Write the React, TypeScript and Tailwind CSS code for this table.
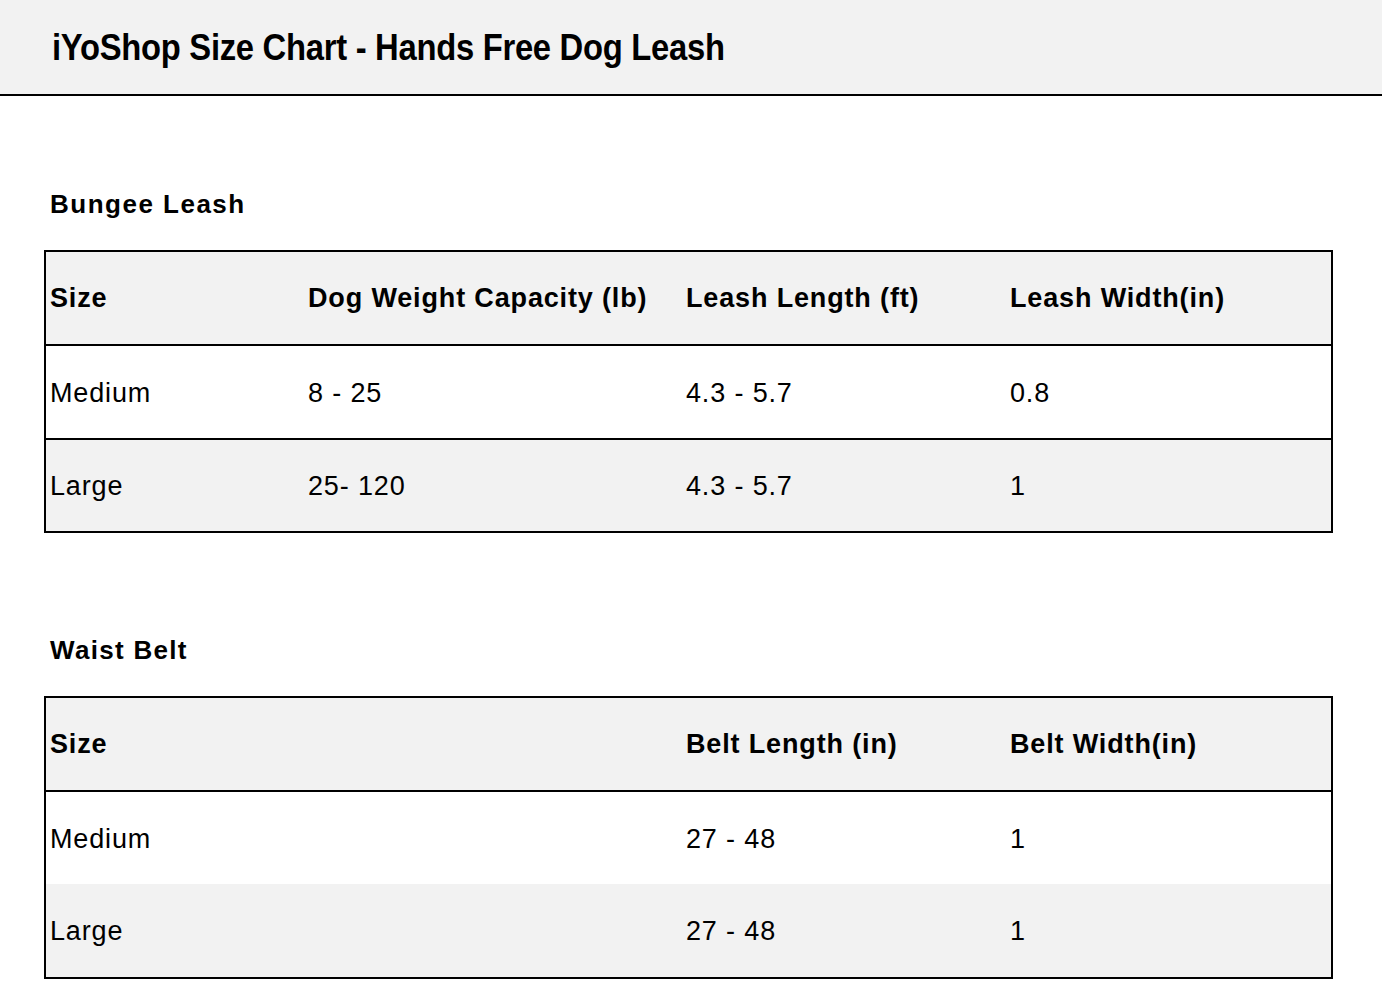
import React from "react";

const font = { fontFamily: '"Liberation Sans", Arial, Helvetica, sans-serif' };

type Row = { cells: string[]; bg: string; border: boolean; h: string };

function Table({ head, rows }: { head: string[]; rows: Row[] }) {
  const cols = "grid grid-cols-[258px_378px_324px_1fr]";
  return (
    <div className="mx-[44px] mr-[49px] border-2 border-black">
      <div className={`${cols} h-[94px] items-center bg-[#f2f2f2] border-b-2 border-black`}>
        {head.map((h, i) => (
          <div key={i} className="pl-[4px] text-[27px] font-bold tracking-[0.85px] text-black">
            {h}
          </div>
        ))}
      </div>
      {rows.map((r, ri) => (
        <div
          key={ri}
          className={`${cols} items-center ${r.bg} ${r.h} ${r.border ? "border-b-2 border-black" : ""}`}
        >
          {r.cells.map((c, i) => (
            <div key={i} className="pl-[4px] pt-[2px] text-[27px] tracking-[0.85px] text-black">
              {c}
            </div>
          ))}
        </div>
      ))}
    </div>
  );
}

export default function App() {
  return (
    <div className="w-[1382px] h-[982px] bg-white overflow-hidden" style={font}>
      <div className="h-[96px] bg-[#f2f2f2] border-b-2 border-black flex items-center pl-[52px]">
        <h1 className="text-[36px] font-bold text-black leading-none tracking-[-0.3px] scale-x-[0.91] origin-left whitespace-nowrap pt-[2px]">
          iYoShop Size Chart - Hands Free Dog Leash
        </h1>
      </div>

      <h2 className="mt-[93px] pl-[50px] h-[30px] leading-[30px] text-[26px] font-bold tracking-[1.5px] text-black">
        Bungee Leash
      </h2>
      <div className="mt-[31px]">
        <Table
          head={["Size", "Dog Weight Capacity (lb)", "Leash Length (ft)", "Leash Width(in)"]}
          rows={[
            { cells: ["Medium", "8 - 25", "4.3 - 5.7", "0.8"], bg: "bg-white", border: true, h: "h-[94px]" },
            { cells: ["Large", "25- 120", "4.3 - 5.7", "1"], bg: "bg-[#f2f2f2]", border: false, h: "h-[91px]" },
          ]}
        />
      </div>

      <h2 className="mt-[102px] pl-[50px] h-[30px] leading-[30px] text-[26px] font-bold tracking-[1.3px] text-black">
        Waist Belt
      </h2>
      <div className="mt-[31px]">
        <Table
          head={["Size", "", "Belt Length (in)", "Belt Width(in)"]}
          rows={[
            { cells: ["Medium", "", "27 - 48", "1"], bg: "bg-white", border: false, h: "h-[92px]" },
            { cells: ["Large", "", "27 - 48", "1"], bg: "bg-[#f2f2f2]", border: false, h: "h-[93px]" },
          ]}
        />
      </div>
    </div>
  );
}
